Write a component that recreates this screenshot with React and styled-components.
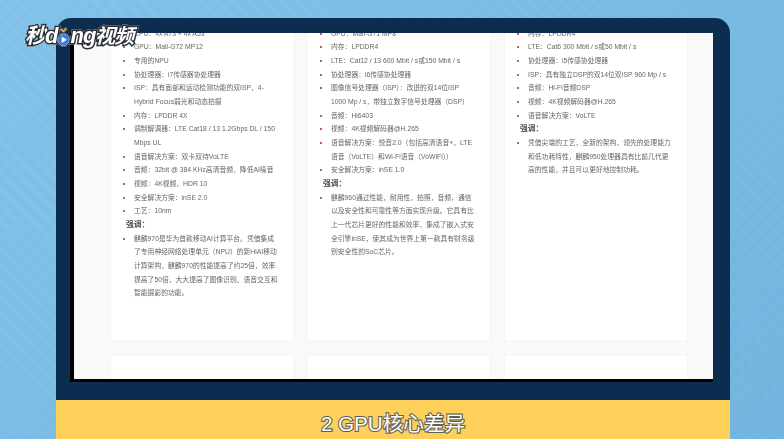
import React from "react";
import styled, { createGlobalStyle } from "styled-components";

const Global = createGlobalStyle`
  html, body { margin: 0; padding: 0; height: 439px; overflow: hidden; }
  * { box-sizing: border-box; }
  #root { height: 439px; }
`;

const Page = styled.div`
  width: 784px;
  height: 439px;
  position: relative;
  overflow: hidden;
  padding: 18px 54px 0 56px;
  background:
    repeating-linear-gradient(45deg, rgba(255,255,255,.025) 0 4px, rgba(0,0,0,.008) 4px 11px),
    linear-gradient(135deg, #83c3ea 0%, #78bbe4 55%, #72b5e0 100%);
  font-family: "Liberation Sans", "Noto Sans CJK SC", sans-serif;
`;

const Frame = styled.div`
  height: 382px;
  padding: 15px 17px 18px 14px;
  background: #0c2d50;
  border-radius: 15px 15px 0 0;
`;

const Screen = styled.div`
  height: 349px;
  overflow: hidden;
  background: #f9f9f9;
  border-left: 4px solid #000;
  border-bottom: 3px solid #000;
  padding-left: 36px;
`;

const Cards = styled.div`
  display: grid;
  grid-template-columns: repeat(3, 183.5px);
  grid-auto-rows: 315.5px;
  column-gap: 13.5px;
  row-gap: 14px;
  margin-top: -7.5px;
  filter: blur(0.4px);
`;

const Card = styled.section`
  background: #fff;
  border: 1px solid #f6f6f6;
  padding: 0 0 0 15px;
`;

const List = styled.ul`
  margin: 0;
  padding: 0 0 0 8px;
  list-style: disc;
`;

const Item = styled.li`
  font-size: 6.8px;
  line-height: 13.67px;
  color: #666;
  white-space: pre;
  &::marker { color: #a5283a; font-size: 8px; }
`;

const Heading = styled.h4`
  margin: 0;
  font-size: 7.8px;
  line-height: 13.67px;
  font-weight: 700;
  color: #4f4f4f;
`;

const Caption = styled.div`
  height: 39px;
  background: #fdd05a;
  display: flex;
  align-items: center;
  justify-content: center;
  padding-top: 9px;
  font-size: 20.6px;
  line-height: 24px;
  color: #fff;
  -webkit-text-stroke: 2.2px #5f5f58;
  paint-order: stroke fill;
`;

const Logo = styled.div`
  position: absolute;
  left: 25px;
  top: 21px;
  height: 30px;
  display: flex;
  align-items: center;
  font-weight: 700;
  font-style: italic;
  color: #fff;
  -webkit-text-stroke: 3px #2b2f36;
  paint-order: stroke fill;
  filter: drop-shadow(0 0 .7px #fff);
`;

const LogoHan = styled.span`
  font-size: ${(p) => p.$size}px;
  line-height: 30px;
  letter-spacing: -1px;
`;

const LogoLatin = styled.span`
  font-family: "Liberation Sans", sans-serif;
  font-size: 22px;
  line-height: 30px;
  letter-spacing: -1px;
`;

const PlayMark = styled.svg`
  width: 13px;
  height: 24px;
  flex: none;
  margin-top: 1px;
`;

const cols = [
  {
    top: [
      "CPU：4x A73 + 4x A53",
      "GPU：Mali-G72 MP12",
      "专用的NPU",
      "协处理器：i7传感器协处理器",
      "ISP：具有面部和运动检测功能的双ISP，4-\nHybrid Focus弱光和动态拍摄",
      "内存：LPDDR 4X",
      "调制解调器：LTE Cat18 / 13 1.2Gbps DL / 150\nMbps UL",
      "语音解决方案：双卡双待VoLTE",
      "音频：32bit @ 384 KHz高清音频，降低AI噪音",
      "视频：4K视频，HDR 10",
      "安全解决方案：inSE 2.0",
      "工艺：10nm",
    ],
    note: "麒麟970是华为首款移动AI计算平台。凭借集成\n了专用神经网络处理单元（NPU）的新HiAI移动\n计算架构，麒麟970的性能提高了约25倍，效率\n提高了50倍，大大提高了图像识别、语音交互和\n智能摄影的功能。",
  },
  {
    top: [
      "GPU：Mali-G71 MP8",
      "内存：LPDDR4",
      "LTE：Cat12 / 13 600 Mbit / s或150 Mbit / s",
      "协处理器：i6传感协处理器",
      "图像信号处理器（ISP）：改进的双14位ISP\n1000 Mp / s，带独立数字信号处理器（DSP）",
      "音频：Hi6403",
      "视频：4K视频解码器@H.265",
      "语音解决方案：悦音2.0（包括高清语音+，LTE\n语音（VoLTE）和Wi-Fi语音（VoWiFi））",
      "安全解决方案：inSE 1.0",
    ],
    note: "麒麟960通过性能，耐用性，拍照，音频，通信\n以及安全性和可靠性等方面实现升级。它具有比\n上一代芯片更好的性能和效率，集成了嵌入式安\n全引擎inSE，使其成为世界上第一款具有财务级\n别安全性的SoC芯片。",
  },
  {
    top: [
      "内存：LPDDR4",
      "LTE：Cat6 300 Mbit / s或50 Mbit / s",
      "协处理器：i5传感协处理器",
      "ISP：具有独立DSP的双14位双ISP 960 Mp / s",
      "音频：Hi-Fi音频DSP",
      "视频：4K视频解码器@H.265",
      "语音解决方案：VoLTE",
    ],
    note: "凭借尖端的工艺，全新的架构，领先的处理能力\n和低功耗特性，麒麟950处理器具有比前几代更\n高的性能，并且可以更好地控制功耗。",
  },
];

export default function App() {
  return (
    <Page>
      <Global />
      <Frame>
        <Screen>
          <Cards>
            {cols.map((c, i) => (
              <Card key={i}>
                <List>
                  {c.top.map((t) => (
                    <Item key={t}>{t}</Item>
                  ))}
                </List>
                <Heading>强调：</Heading>
                <List>
                  <Item>{c.note}</Item>
                </List>
              </Card>
            ))}
            <Card />
            <Card />
            <Card />
          </Cards>
        </Screen>
      </Frame>
      <Caption>2 GPU核心差异</Caption>
      <Logo>
        <LogoHan $size={21}>秒</LogoHan>
        <LogoLatin>d</LogoLatin>
        <PlayMark viewBox="0 0 14 24">
          <circle cx="7" cy="15" r="7.4" fill="#2b2f36" />
          <path d="M4 3.5 L7 6 L10 2.5" fill="none" stroke="#2b2f36" strokeWidth="3.4" />
          <path d="M4 3.5 L7 6 L10 2.5" fill="none" stroke="#f4c22e" strokeWidth="1.6" />
          <circle cx="7" cy="15" r="6" fill="#2f7fe6" stroke="#fff" strokeWidth="1" />
          <path d="M5 11.5 L10.5 15 L5 18.5 Z" fill="#fff" />
        </PlayMark>
        <LogoLatin>ng</LogoLatin>
        <LogoHan $size={20}>视频</LogoHan>
      </Logo>
    </Page>
  );
}
